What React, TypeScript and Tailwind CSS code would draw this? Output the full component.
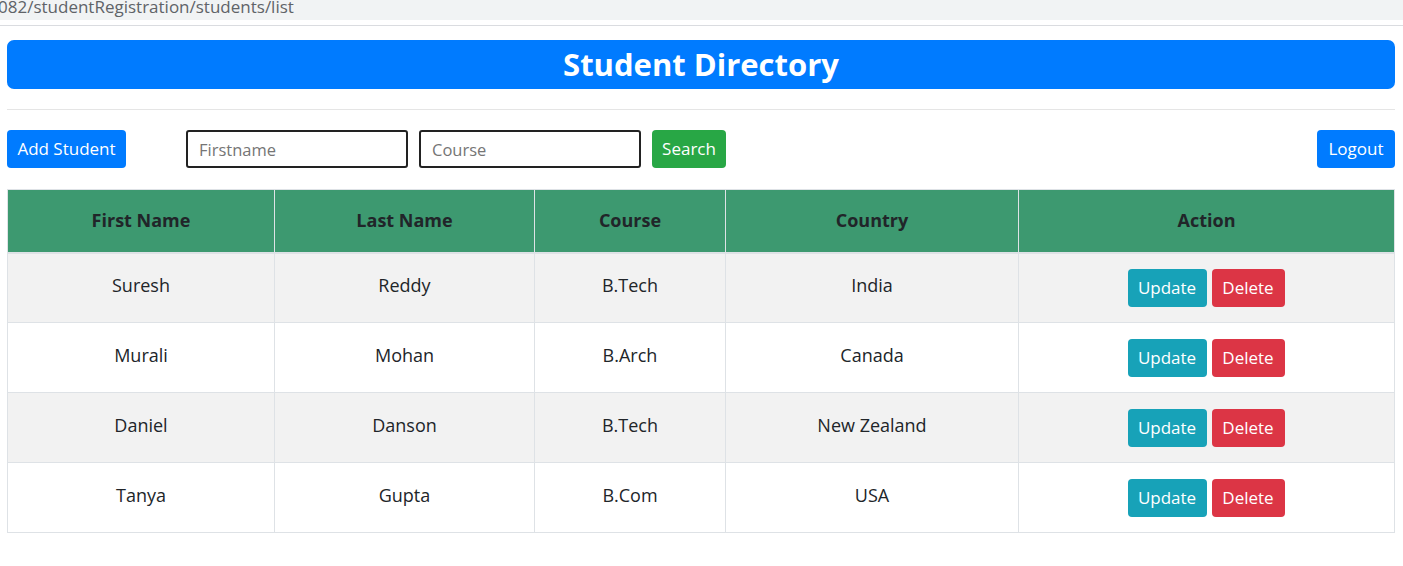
import React from "react";

const students = [
    { first: "Suresh", last: "Reddy", course: "B.Tech", country: "India" },
    { first: "Murali", last: "Mohan", course: "B.Arch", country: "Canada" },
    { first: "Daniel", last: "Danson", course: "B.Tech", country: "New Zealand" },
    { first: "Tanya", last: "Gupta", course: "B.Com", country: "USA" },
];

const font = { fontFamily: '"Open Sans", "Noto Sans", Arial, sans-serif' };

export default function App() {
    return (
        <div className="min-h-[566px] bg-white text-[#212529]" style={font}>

            {/* browser address strip */}

            <div className="h-[20px] overflow-hidden bg-[#f1f3f4]">
                <p className="-mt-[5px] -ml-[2px] text-[17px] leading-[24px] text-[#5f6368]">
                    082/studentRegistration/students/list
                </p>
            </div>
            <div className="mt-[5px] h-px bg-[#dadce0]" />

            <div className="ml-[7px] mr-[8px] pt-[14px]">

                <h1 className="rounded-[7px] bg-[#007bff] text-center text-[31px] font-bold leading-[49px] text-white">
                    Student Directory
                </h1>

                <hr className="mt-[20px] border-t border-[#e5e5e5]" />

                {/* toolbar */}

                <div className="mt-[20px] flex h-[38px] items-center">

                    <button className="h-[38px] w-[119px] rounded-[4px] bg-[#007bff] text-[17px] text-white">
                        Add Student
                    </button>

                    <input
                        placeholder="Firstname"
                        className="ml-[60px] h-[38px] w-[222px] rounded-[3px] border-2 border-[#222] px-[11px] text-[16.5px] placeholder:text-[#757575]"
                    />

                    <input
                        placeholder="Course"
                        className="ml-[11px] h-[38px] w-[222px] rounded-[3px] border-2 border-[#222] px-[11px] text-[16.5px] placeholder:text-[#757575]"
                    />

                    <button className="ml-[11px] h-[38px] w-[74px] rounded-[4px] bg-[#28a745] text-[17px] text-white">
                        Search
                    </button>

                    <button className="ml-auto h-[38px] w-[78px] rounded-[4px] bg-[#007bff] text-[17px] text-white">
                        Logout
                    </button>

                </div>

                {/* table */}

                <table className="mt-[21px] w-full table-fixed border-collapse text-center text-[18px]">
                    <colgroup>
                        <col className="w-[267px]" />
                        <col className="w-[260px]" />
                        <col className="w-[191px]" />
                        <col className="w-[293px]" />
                        <col />
                    </colgroup>
                    <thead>
                        <tr className="bg-[#3d9970]">
                            {["First Name", "Last Name", "Course", "Country", "Action"].map((h) => (
                                <th
                                    key={h}
                                    className="h-[63px] border border-b-2 border-[#dee2e6] font-bold"
                                >
                                    {h}
                                </th>
                            ))}
                        </tr>
                    </thead>
                    <tbody>
                        {students.map((s, i) => (
                            <tr key={s.first} className={i % 2 === 0 ? "bg-[#f2f2f2]" : "bg-white"}>
                                <td className="h-[70px] border border-[#dee2e6] pb-[5px]">{s.first}</td>
                                <td className="border border-[#dee2e6] pb-[5px]">{s.last}</td>
                                <td className="border border-[#dee2e6] pb-[5px]">{s.course}</td>
                                <td className="border border-[#dee2e6] pb-[5px]">{s.country}</td>
                                <td className="border border-[#dee2e6]">
                                    <div className="flex items-center justify-center gap-[5px] pr-[1px]">
                                        <button className="h-[38px] w-[79px] rounded-[4px] bg-[#17a2b8] text-[17px] text-white">
                                            Update
                                        </button>
                                        <button className="h-[38px] w-[73px] rounded-[4px] bg-[#dc3545] text-[17px] text-white">
                                            Delete
                                        </button>
                                    </div>
                                </td>
                            </tr>
                        ))}
                    </tbody>
                </table>

            </div>
        </div>
    );
}
